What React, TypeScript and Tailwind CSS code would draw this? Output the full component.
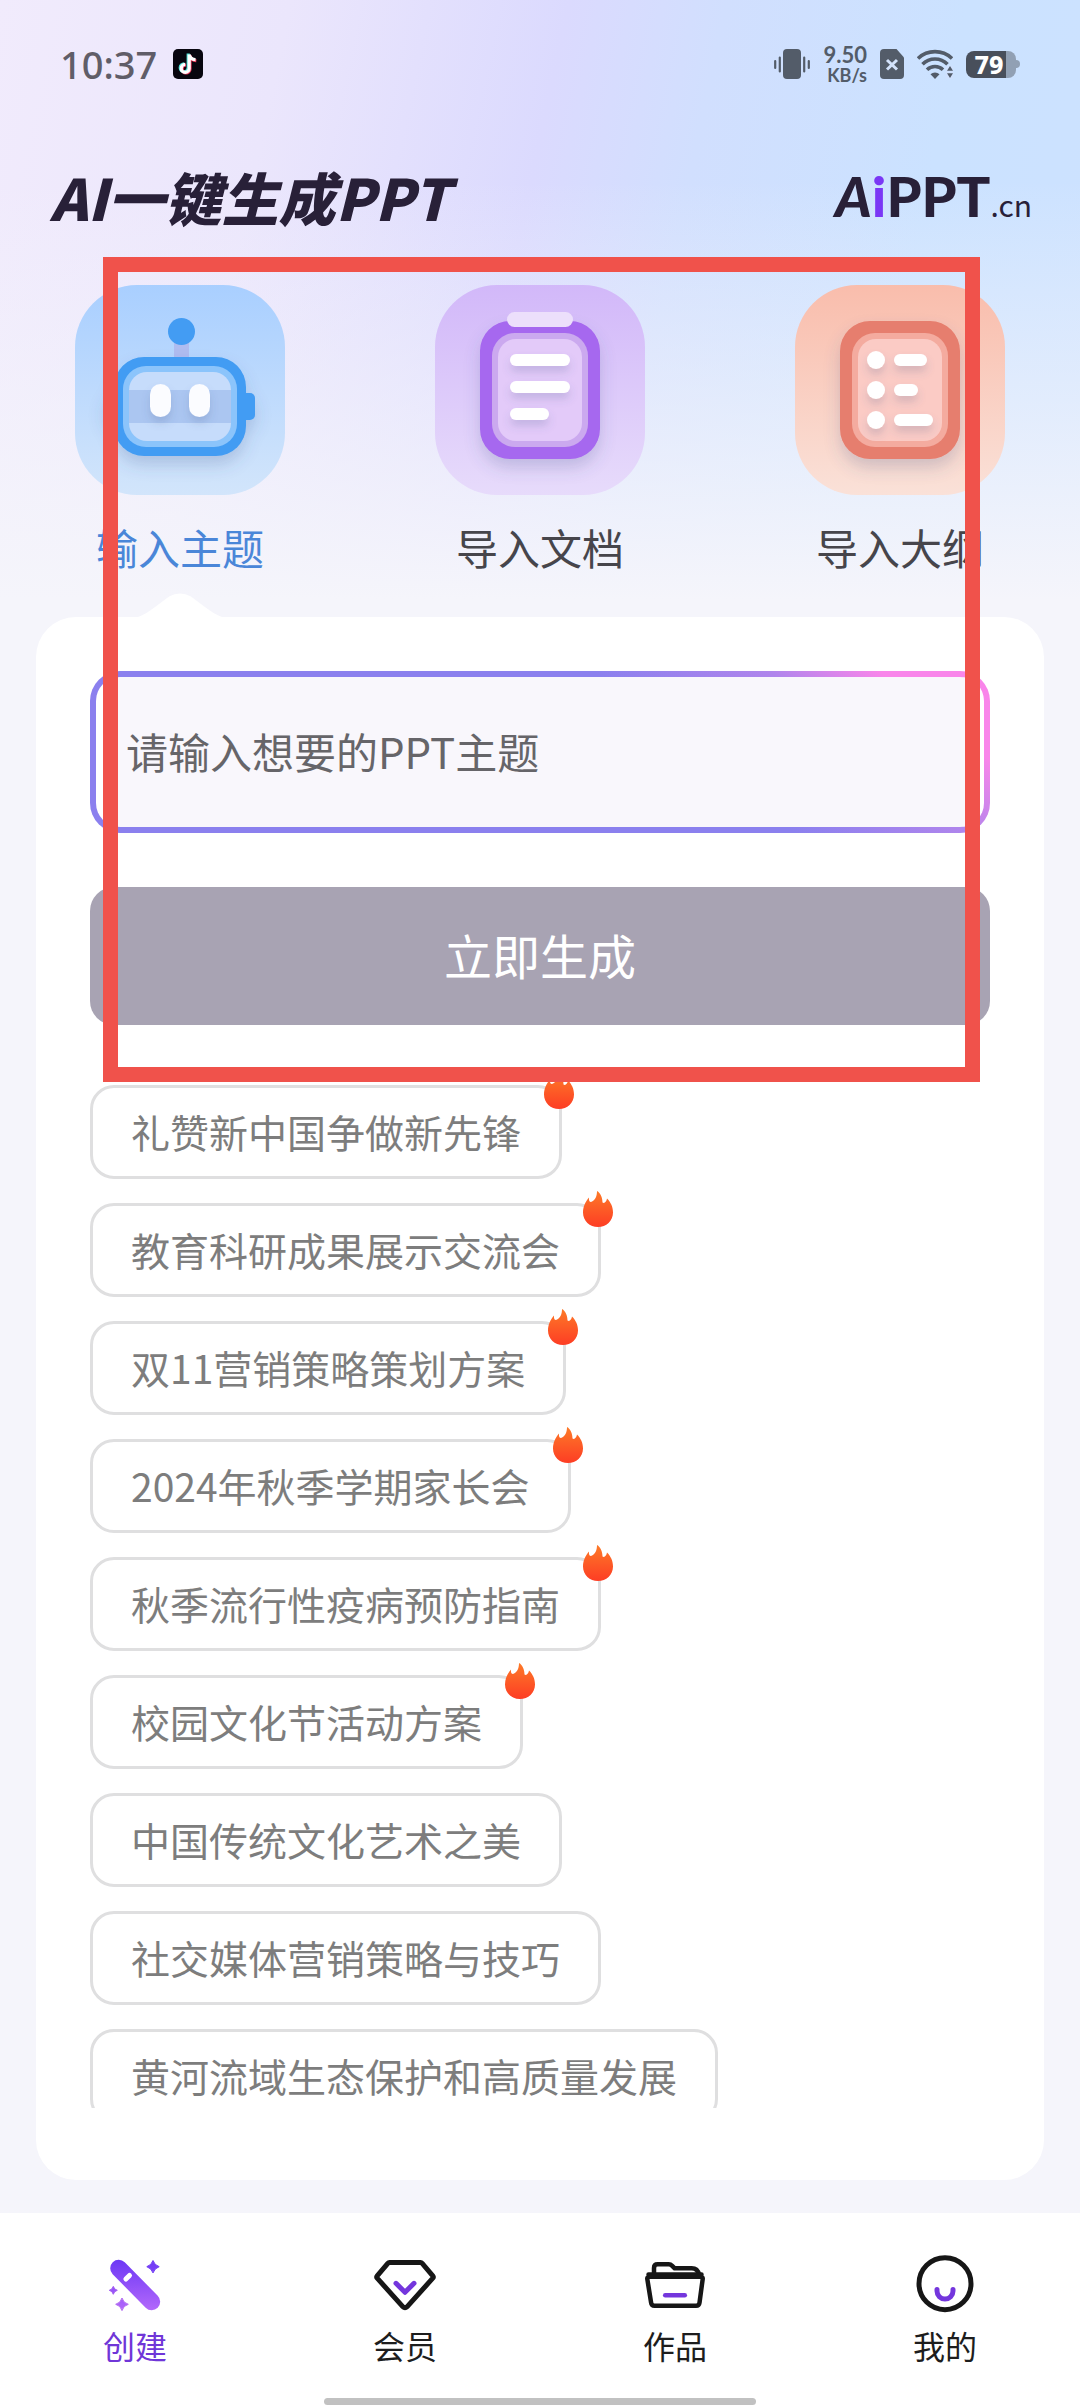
import React, { useState } from "react";

type Topic = { text: string; hot?: boolean };

const topics: Topic[] = [
  { text: "礼赞新中国争做新先锋", hot: true },
  { text: "教育科研成果展示交流会", hot: true },
  { text: "双11营销策略策划方案", hot: true },
  { text: "2024年秋季学期家长会", hot: true },
  { text: "秋季流行性疫病预防指南", hot: true },
  { text: "校园文化节活动方案", hot: true },
  { text: "中国传统文化艺术之美" },
  { text: "社交媒体营销策略与技巧" },
  { text: "黄河流域生态保护和高质量发展" },
];

function TileDefs({ id, from, to }: { id: string; from: string; to: string }) {
  return (
    <defs>
      <linearGradient id={id} x1="0" y1="0" x2="0" y2="1">
        <stop offset="0" stopColor={from} />
        <stop offset="1" stopColor={to} />
      </linearGradient>
      <filter id={`${id}-shadow`} x="-30%" y="-30%" width="160%" height="180%">
        <feDropShadow dx="0" dy="9" stdDeviation="8" floodColor="#45598a" floodOpacity="0.22" />
      </filter>
      <filter id={`${id}-soft`} x="-30%" y="-30%" width="160%" height="200%">
        <feDropShadow dx="0" dy="6" stdDeviation="4" floodColor="#45598a" floodOpacity="0.2" />
      </filter>
    </defs>
  );
}

function RobotIcon() {
  return (
    <svg viewBox="0 0 210 210" className="size-[210px]" aria-hidden="true">
      <TileDefs id="robot" from="#a9cfff" to="#d2e5fb" />
      <rect width="210" height="210" rx="62" fill="url(#robot)" />
      <rect x="99" y="56" width="15" height="18" fill="#afbcf0" />
      <circle cx="106.5" cy="46.5" r="13.5" fill="#439cf3" />
      <g filter="url(#robot-shadow)">
        <rect x="30" y="108" width="18" height="27" rx="5" fill="#439cf3" />
        <rect x="162" y="108" width="18" height="27" rx="5" fill="#439cf3" />
        <rect x="39" y="72" width="132" height="99" rx="30" fill="#439cf3" />
      </g>
      <rect x="48" y="81" width="114" height="81" rx="23" fill="#8bc4fb" />
      <rect x="54" y="87" width="102" height="69" rx="18" fill="#c6dcfb" />
      <rect x="54" y="105" width="102" height="33" fill="#abc6f1" />
      <g fill="#fbfcff" filter="url(#robot-soft)">
        <rect x="75" y="99" width="21" height="33" rx="10.5" />
        <rect x="114" y="99" width="21" height="33" rx="10.5" />
      </g>
    </svg>
  );
}

function DocumentIcon() {
  return (
    <svg viewBox="0 0 210 210" className="size-[210px]" aria-hidden="true">
      <TileDefs id="doc" from="#d2b8f9" to="#e7dbfb" />
      <rect width="210" height="210" rx="62" fill="url(#doc)" />
      <rect x="45" y="36" width="120" height="138" rx="30" fill="#a667ef" filter="url(#doc-shadow)" />
      <rect x="57" y="48" width="96" height="114" rx="23" fill="#cba9ef" />
      <rect x="63" y="54" width="84" height="102" rx="18" fill="#e3caf9" />
      <rect x="72" y="27" width="66" height="15" rx="7.5" fill="#ecdffb" />
      <g fill="#fff" filter="url(#doc-soft)">
        <rect x="75" y="69" width="60" height="12" rx="6" />
        <rect x="75" y="96" width="60" height="12" rx="6" />
        <rect x="75" y="123" width="39" height="12" rx="6" />
      </g>
    </svg>
  );
}

function OutlineIcon() {
  return (
    <svg viewBox="0 0 210 210" className="size-[210px]" aria-hidden="true">
      <TileDefs id="outline" from="#f9bdac" to="#fae1d8" />
      <rect width="210" height="210" rx="62" fill="url(#outline)" />
      <rect x="45" y="36" width="120" height="138" rx="30" fill="#e67e6e" filter="url(#outline-shadow)" />
      <rect x="57" y="48" width="96" height="114" rx="23" fill="#f4ab9f" />
      <rect x="63" y="54" width="84" height="102" rx="18" fill="#fbcbc5" />
      <g fill="#fff" filter="url(#outline-soft)">
        <circle cx="81" cy="75" r="9" />
        <circle cx="81" cy="105" r="9" />
        <circle cx="81" cy="135" r="9" />
        <rect x="99" y="69" width="33" height="12" rx="6" />
        <rect x="99" y="99" width="24" height="12" rx="6" />
        <rect x="99" y="129" width="39" height="12" rx="6" />
      </g>
    </svg>
  );
}

function FlameIcon() {
  return (
    <svg viewBox="0 0 30 36" className="absolute -top-[15px] -right-[15px] h-9 w-[30px]" aria-hidden="true">
      <defs>
        <linearGradient id="flame" x1="0" y1="0" x2="0" y2="1">
          <stop offset="0" stopColor="#fd7a28" />
          <stop offset="1" stopColor="#fd3d24" />
        </linearGradient>
      </defs>
      <path
        d="M15 36C6.700 36 0 30 0 21.500C0 15.500 2.500 10.500 6 6.500C5.700 9.500 6.500 11 8 11C12.500 9 14 5 14 0C17.500 2 19.500 6.500 19.500 11.500C21.500 13 23.500 10.500 24 7.500C27.500 11 30 15.500 30 21.500C30 30 23.300 36 15 36Z"
        fill="url(#flame)"
      />
    </svg>
  );
}

function StatusBar() {
  return (
    <div className="flex h-32 items-center justify-between px-[60px]">
      <div className="flex items-center gap-4 text-[#605d68]">
        <span className="font-['Noto_Sans','Noto_Sans_CJK_SC',sans-serif] text-[38px] leading-none font-medium">
          10:37
        </span>
        <svg viewBox="0 0 30 30" className="size-[30px]" aria-hidden="true">
          <rect width="30" height="30" rx="5" fill="#08060f" />
          <g fill="none" strokeWidth="3.200">
            <path d="M15.200 4.500v14.300a4 4 0 1 1-4-4M15.200 5.500c.6 3 3 5 6.300 5.200" stroke="#4ee3d8" />
            <path d="M17 6.500v13.500a4 4 0 1 1-4-4M17 6.500c.6 3 3 5 6.300 5.200" stroke="#ee3a5c" />
            <path d="M16.200 5.500v13.900a4 4 0 1 1-4-4M16.200 5.500c.6 3 3 5 6.300 5.200" stroke="#fff" />
          </g>
        </svg>
      </div>
      <div className="flex items-center gap-[13px] text-[#535c69]">
        <svg viewBox="0 0 36 30" className="h-[30px] w-9" aria-hidden="true">
          <rect x="9" width="18" height="30" rx="4" fill="currentColor" />
          <path
            d="M1.200 12v7M5.800 8.500v14M30.200 8.500v14M34.800 12v7"
            stroke="currentColor"
            strokeWidth="2.200"
            strokeLinecap="round"
          />
        </svg>
        <div className="flex flex-col items-end font-['Lato','Noto_Sans_CJK_SC',sans-serif] font-bold">
          <span className="text-[22px] leading-[22px]">9.50</span>
          <span className="text-[18px] leading-[18px]">KB/s</span>
        </div>
        <svg viewBox="0 0 24 30" className="h-[30px] w-6" aria-hidden="true">
          <path d="M4 0h12.500L24 8.500V26a4 4 0 0 1-4 4H4a4 4 0 0 1-4-4V4a4 4 0 0 1 4-4Z" fill="currentColor" />
          <path d="m7 11 10 9.500M17 11 7 20.500" stroke="#d3e2fb" strokeWidth="3" />
        </svg>
        <svg viewBox="0 0 36 30" className="h-[30px] w-9" aria-hidden="true">
          <g fill="none" stroke="currentColor" strokeWidth="3.600">
            <path d="M1 9.500A24.500 24.500 0 0 1 35 9.500" />
            <path d="M5.500 15.300A17.500 17.500 0 0 1 30.500 15.300" />
            <path d="M10 20.700A11.500 11.500 0 0 1 26 20.700" />
          </g>
          <path d="M13.500 25.200a6.500 6.500 0 0 1 9 0L18 30Z" fill="currentColor" />
          <path d="M28.500 17h9v13h-9Z" fill="#cfe1fe" />
          <path d="m33 17 3 4.800h-6ZM33 29l3-4.800h-6Z" fill="currentColor" />
        </svg>
        <div className="flex items-center">
          <div className="flex h-[27px] w-[50px] items-center justify-center rounded-lg bg-linear-to-r from-[#484f5b] from-80% to-[#91a0b4] to-80% pr-1 font-['Noto_Sans','Noto_Sans_CJK_SC',sans-serif] text-[25px] leading-none font-extrabold text-white">
            79
          </div>
          <div className="h-2 w-1 rounded-r-sm bg-[#91a0b4]" />
        </div>
      </div>
    </div>
  );
}

function Brand() {
  return (
    <div className="flex items-baseline font-['Lato',sans-serif] text-[56px] leading-none font-black text-[#282038]">
      <span className="italic">A</span>
      <span className="text-[#7a37f5]">i</span>
      <span>PPT</span>
      <span className="font-['Noto_Sans_CJK_SC',sans-serif] text-[30px] font-normal">.cn</span>
    </div>
  );
}

const modes = [
  { label: "输入主题", icon: <RobotIcon /> },
  { label: "导入文档", icon: <DocumentIcon /> },
  { label: "导入大纲", icon: <OutlineIcon /> },
];

function WandIcon() {
  return (
    <svg viewBox="0 0 60 60" className="size-[60px] overflow-visible" aria-hidden="true">
      <defs>
        <linearGradient id="wand" x1="0" y1="6" x2="0" y2="56" gradientUnits="userSpaceOnUse">
          <stop offset="0" stopColor="#6d38f5" />
          <stop offset="1" stopColor="#b268fb" />
        </linearGradient>
      </defs>
      <path d="m13.700 14.300 33 33.400" stroke="url(#wand)" strokeWidth="17" strokeLinecap="round" />
      <path d="m20.900 25.100 3.600-3.600" stroke="#fff" strokeWidth="5" strokeLinecap="round" />
      <g fill="url(#wand)">
        <path d="M48 6.500q1.500 4.700 6.200 6.200-4.700 1.500-6.200 6.200-1.500-4.700-6.200-6.200 4.700-1.500 6.200-6.200Z" stroke="#6d38f5" />
        <path d="M17 44q1.300 5 6.300 6.300-5 1.300-6.300 6.300-1.300-5-6.300-6.300 5-1.300 6.300-6.300Z" stroke="#b36cf0" />
        <path d="M8.300 32.300q.8 3.200 4 4-3.200.8-4 4-.8-3.200-4-4 3.200-.8 4-4Z" stroke="#a35cf2" />
      </g>
    </svg>
  );
}

function DiamondIcon() {
  return (
    <svg
      viewBox="0 0 60 60"
      className="size-[60px] overflow-visible"
      fill="none"
      strokeWidth="5"
      strokeLinecap="round"
      strokeLinejoin="round"
      aria-hidden="true"
    >
      <path
        d="M14.500 8.500h31q1 0 1.700.8l10.600 12.500q1 1.200 0 2.400L32 52.800q-2 2-4 0L2.200 24.200q-1-1.200 0-2.400L12.800 9.300q.7-.8 1.700-.8Z"
        stroke="#161616"
      />
      <path d="m21 29.300 9 9 9-9" stroke="#7436dd" />
    </svg>
  );
}

function FolderIcon() {
  return (
    <svg
      viewBox="0 0 60 60"
      className="size-[60px] overflow-visible"
      fill="none"
      stroke="#161616"
      strokeWidth="4.500"
      strokeLinecap="round"
      strokeLinejoin="round"
      aria-hidden="true"
    >
      <path d="M9 21v-7q0-3.700 3.700-3.700h11q2 0 3.500 1.500l2.500 2.500h17q6 0 7.500 6.700" />
      <path d="M4.500 22.700h51q2.500 0 2.200 2.300l-3.200 23.700q-.4 3-3.400 3H9.500q-3 0-3.400-3L2.300 25q-.3-2.300 2.200-2.300ZM3.500 20.500h53" />
      <path d="M20.200 41.300h19.600" stroke="#7436dd" />
    </svg>
  );
}

function FaceIcon() {
  return (
    <svg viewBox="0 0 60 60" className="size-[60px]" fill="none" strokeWidth="5" strokeLinecap="round" aria-hidden="true">
      <circle cx="30" cy="29.700" r="26" stroke="#161616" />
      <path d="M22 35.500v1.500a8 8 0 0 0 16 0v-1.500" stroke="#7436dd" />
    </svg>
  );
}

const navItems = [
  { label: "创建", icon: <WandIcon /> },
  { label: "会员", icon: <DiamondIcon /> },
  { label: "作品", icon: <FolderIcon /> },
  { label: "我的", icon: <FaceIcon /> },
];

export default function App() {
  const [mode, setMode] = useState(0);
  const [topic, setTopic] = useState("");

  return (
    <div className="relative flex h-screen flex-col bg-[#f5f5fb] bg-[linear-gradient(to_bottom,transparent_180px,#f5f5fb_600px),linear-gradient(102deg,#f1ebfc_0%,#ebe6fc_24%,#dbdafe_47%,#d1dffe_60%,#cbe2ff_80%,#cde2ff_100%)] bg-[length:100%_620px] bg-no-repeat font-['Noto_Sans_CJK_SC',sans-serif]">
      <StatusBar />

      <header className="flex h-[140px] items-center justify-between pr-12 pb-1 pl-[50px]">
        <h1 className="text-[57px] leading-none font-black text-[#282038] italic">AI一键生成PPT</h1>
        <Brand />
      </header>

      <div className="grid grid-cols-3 pt-[17px]">
        {modes.map((item, i) => (
          <button
            key={item.label}
            onClick={() => setMode(i)}
            className={`relative flex flex-col items-center gap-[22px] pb-10 text-[42px] leading-[60px] ${
              mode === i ? "text-[#4a86d8]" : "text-[#46454b]"
            }`}
          >
            {item.icon}
            {item.label}
            {mode === i && (
              <svg viewBox="0 0 84 25" className="absolute bottom-0 h-[25px] w-[84px]" aria-hidden="true">
                <path d="M0 25C6 23 10 20 15 16.500L31 4.500Q42-1.500 53 4.500L69 16.500C74 20 78 23 84 25Z" fill="#fff" />
              </svg>
            )}
          </button>
        ))}
      </div>

      <main className="mx-9 mb-[33px] flex min-h-0 flex-1 flex-col rounded-[40px] bg-white px-[54px] pt-[54px] pb-[72px]">
        <div className="shrink-0 rounded-[30px] bg-[linear-gradient(39deg,#8b80ee_64%,#b085ec_80%,#f985ea_90%)] p-1.5">
          <input
            type="text"
            aria-label="请输入想要的PPT主题"
            placeholder="请输入想要的PPT主题"
            value={topic}
            onChange={(e) => setTopic(e.target.value)}
            className="block h-[150px] w-full rounded-3xl border-x-[9px] border-white bg-[#f9f7fc] px-[21px] pb-1 text-[42px] text-[#333] outline-none placeholder:text-[#666569]"
          />
        </div>
        <button className="mt-[54px] h-[138px] shrink-0 rounded-3xl bg-[#a8a3b3] pb-1 text-[48px] text-white">
          立即生成
        </button>

        <ul className="mt-12 flex min-h-0 flex-1 flex-col items-start gap-6 overflow-y-auto pt-3 [scrollbar-width:none]">
          {topics.map((item) => (
            <li key={item.text} className="shrink-0">
              <button
                onClick={() => setTopic(item.text)}
                className="relative block rounded-3xl border-3 border-[#dfdfe0] px-[38px] pb-0.5 text-[39px] leading-[86px] text-[#7d7d7d]"
              >
                {item.text}
                {item.hot && <FlameIcon />}
              </button>
            </li>
          ))}
        </ul>
      </main>

      <nav className="bg-white pt-[41px] pb-[3px]">
        <div className="grid grid-cols-4">
          {navItems.map((item, i) => (
            <a
              key={item.label}
              href="#"
              className={`flex flex-col items-center gap-[11px] text-[32px] leading-10 ${
                i === 0 ? "text-[#7036d8]" : "text-[#1d1d1d]"
              }`}
            >
              {item.icon}
              {item.label}
            </a>
          ))}
        </div>
        <div className="mx-auto mt-[33px] h-[7px] w-2/5 rounded-full bg-[#c1c1c1]" />
      </nav>

      {/* highlighted area */}
      <div className="pointer-events-none absolute top-[257px] right-[100px] left-[103px] h-[825px] border-[15px] border-[#f0524b]" />
    </div>
  );
}
